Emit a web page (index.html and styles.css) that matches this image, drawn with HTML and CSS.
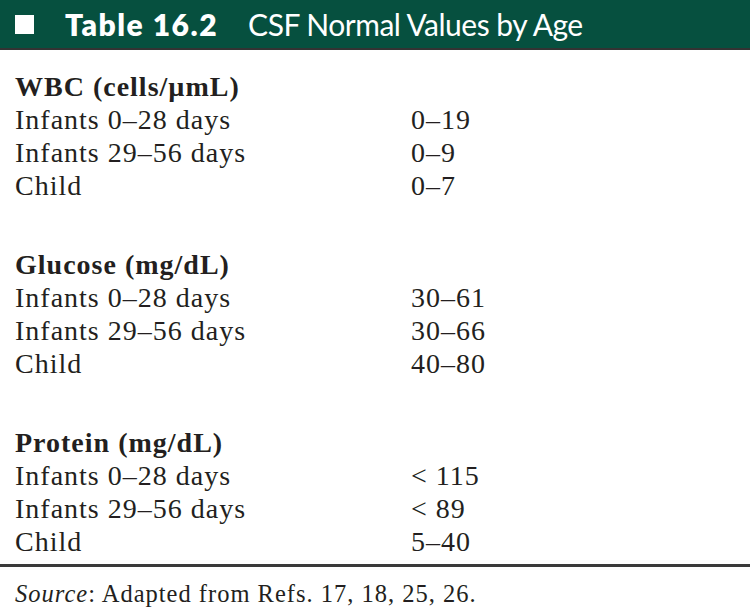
FILE: index.html
```html
<!DOCTYPE html>
<html lang="en">
<head>
<meta charset="utf-8">
<title>Table 16.2 CSF Normal Values by Age</title>
<link rel="stylesheet" href="styles.css">
</head>
<body>
<div class="page">
  <header class="banner">
    <span class="square"></span>
    <span class="label">Table 16.2</span>
    <span class="title">CSF Normal Values by Age</span>
  </header>
  <div class="rule-top"></div>

  <div class="groups">
    <section class="group">
      <div class="head">WBC (cells/µmL)</div>
      <div class="row"><span class="name">Infants 0–28 days</span><span class="val">0–19</span></div>
      <div class="row"><span class="name">Infants 29–56 days</span><span class="val">0–9</span></div>
      <div class="row"><span class="name">Child</span><span class="val">0–7</span></div>
    </section>

    <section class="group">
      <div class="head">Glucose (mg/dL)</div>
      <div class="row"><span class="name">Infants 0–28 days</span><span class="val">30–61</span></div>
      <div class="row"><span class="name">Infants 29–56 days</span><span class="val">30–66</span></div>
      <div class="row"><span class="name">Child</span><span class="val">40–80</span></div>
    </section>

    <section class="group">
      <div class="head">Protein (mg/dL)</div>
      <div class="row"><span class="name">Infants 0–28 days</span><span class="val">&lt; 115</span></div>
      <div class="row"><span class="name">Infants 29–56 days</span><span class="val">&lt; 89</span></div>
      <div class="row"><span class="name">Child</span><span class="val">5–40</span></div>
    </section>
  </div>

  <div class="rule-bottom"></div>
  <p class="source"><em>Source</em>: Adapted from Refs. 17, 18, 25, 26.</p>
</div>
</body>
</html>
```

FILE: styles.css
```css
html, body {
  margin: 0;
  padding: 0;
  background: #ffffff;
}

.page {
  width: 750px;
  color: #231f20;
  font-family: "Liberation Serif", "Times New Roman", serif;
}

.banner {
  height: 48px;
  background: #06503f;
  display: flex;
  align-items: center;
  padding-left: 15px;
  color: #ffffff;
  font-family: "Lato", "DejaVu Sans", sans-serif;
  font-size: 30px;
  line-height: 1;
}

.square {
  width: 19px;
  height: 19px;
  background: #ffffff;
  margin-right: 31px;
  flex: none;
}

.label {
  font-weight: 800;
  letter-spacing: 1.5px;
  margin-right: 30px;
}

.title {
  font-weight: 400;
  letter-spacing: -0.5px;
}

.rule-top {
  height: 2px;
  background: #333333;
}

.groups {
  display: flex;
  flex-direction: column;
  gap: 46px;
  padding: 20px 0 0 15px;
}

.head,
.row {
  font-size: 28px;
  line-height: 33px;
  letter-spacing: 1px;
}

.head {
  font-weight: 700;
}

.row {
  display: grid;
  grid-template-columns: 396px 1fr;
}

.rule-bottom {
  height: 3px;
  background: #3a3a3a;
  margin-top: 6px;
}

.source {
  margin: 0;
  padding: 13px 0 0 15px;
  font-size: 24.5px;
  line-height: 28px;
  letter-spacing: 1px;
}
```
